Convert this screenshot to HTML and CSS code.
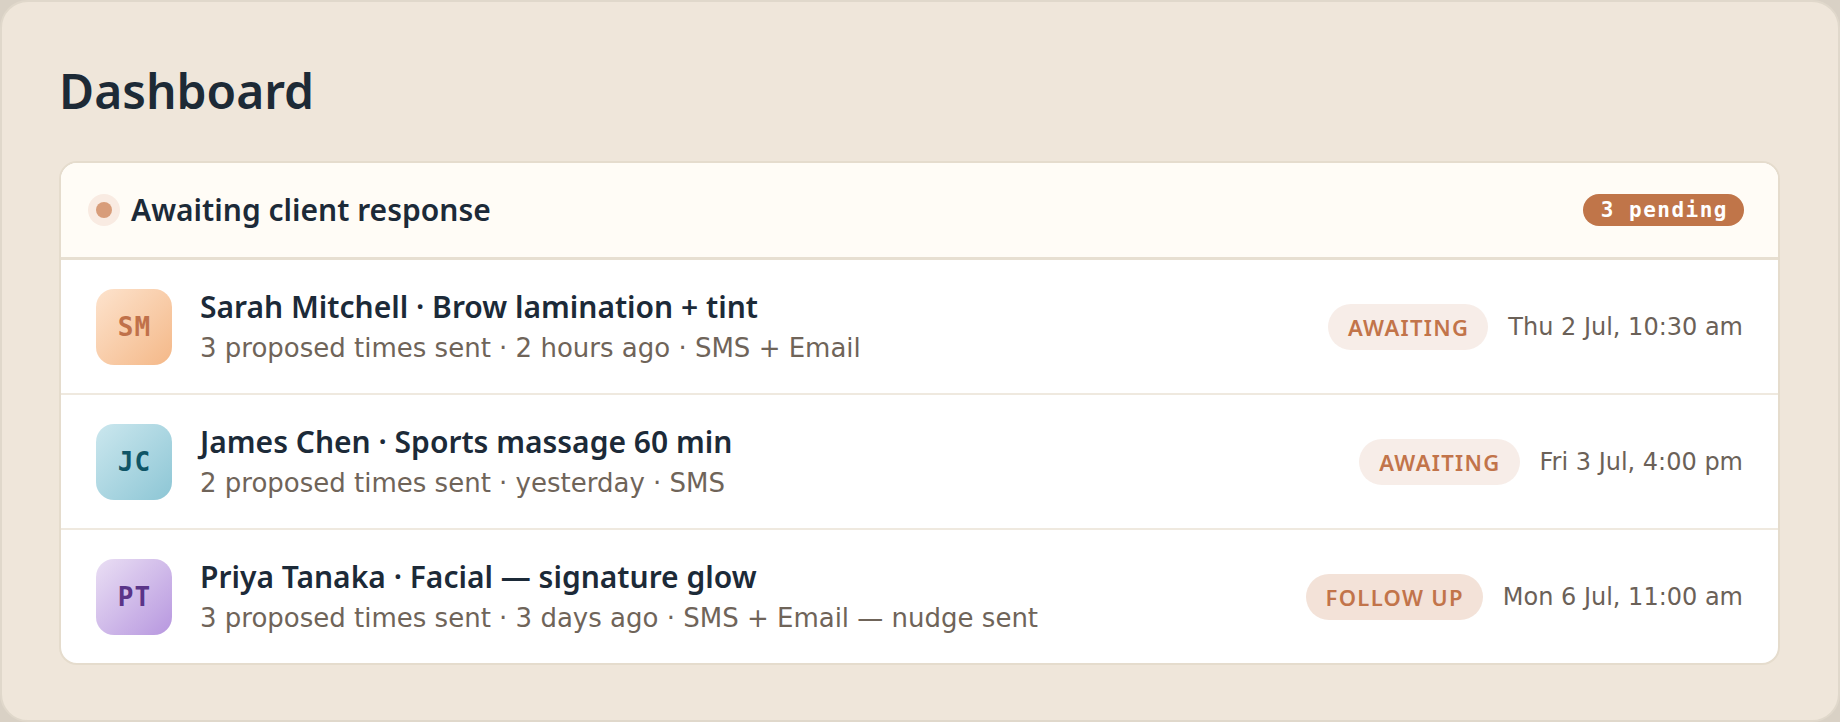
FILE: index.html
```html
<!DOCTYPE html>
<html lang="en">
<head>
<meta charset="utf-8">
<title>Dashboard</title>
<link rel="stylesheet" href="styles.css">
</head>
<body>
<div class="frame">
  <h1 class="title">Dashboard</h1>
  <section class="card">
    <header class="card-head">
      <span class="dot"></span>
      <h2 class="head-title">Awaiting client response</h2>
      <span class="count">3 pending</span>
    </header>
    <div class="row">
      <div class="avatar av-sm">SM</div>
      <div class="info">
        <div class="name">Sarah Mitchell · Brow lamination + tint</div>
        <div class="meta">3 proposed times sent · 2 hours ago · SMS + Email</div>
      </div>
      <span class="pill">AWAITING</span>
      <span class="date">Thu 2 Jul, 10:30 am</span>
    </div>
    <div class="row">
      <div class="avatar av-jc">JC</div>
      <div class="info">
        <div class="name">James Chen · Sports massage 60 min</div>
        <div class="meta">2 proposed times sent · yesterday · SMS</div>
      </div>
      <span class="pill">AWAITING</span>
      <span class="date">Fri 3 Jul, 4:00 pm</span>
    </div>
    <div class="row">
      <div class="avatar av-pt">PT</div>
      <div class="info">
        <div class="name">Priya Tanaka · Facial — signature glow</div>
        <div class="meta">3 proposed times sent · 3 days ago · SMS + Email — nudge sent</div>
      </div>
      <span class="pill pill-follow">FOLLOW UP</span>
      <span class="date">Mon 6 Jul, 11:00 am</span>
    </div>
  </section>
</div>
</body>
</html>
```
FILE: styles.css
```css
* { box-sizing: border-box; }
html, body { margin: 0; padding: 0; }
body {
  background: #d9d1c5;
  font-family: "Noto Sans", "DejaVu Sans", sans-serif;
}
.frame {
  height: 722px;
  background: #efe6da;
  border: 2px solid #e0d8cb;
  border-radius: 28px;
  padding: 60px 58px 0 57px;
}
.title {
  margin: 0 0 41px;
  font-family: "Noto Sans", sans-serif;
  font-weight: 600;
  font-size: 48px;
  line-height: 1.2;
  color: #1d2a36;
}
.card {
  background: #ffffff;
  border: 2px solid #e5dccd;
  border-radius: 18px;
  overflow: hidden;
}
.card-head {
  display: flex;
  align-items: center;
  height: 97px;
  padding: 0 34px 0 35px;
  background: #fffcf6;
  border-bottom: 3px solid #e7dfd1;
}
.dot {
  width: 16px;
  height: 16px;
  border-radius: 50%;
  background: #d89d7a;
  box-shadow: 0 0 0 8px #f9ebe2;
  flex: none;
}
.head-title {
  margin: 0 0 0 19px;
  flex: 1;
  font-weight: 600;
  font-size: 30px;
  line-height: 1.3;
  color: #1c2a38;
}
.count {
  height: 32px;
  line-height: 32px;
  padding: 0 16px 0 18px;
  border-radius: 16px;
  background: #c07549;
  color: #ffffff;
  font-family: "DejaVu Sans Mono", monospace;
  font-weight: 700;
  font-size: 21px;
  letter-spacing: 1.5px;
}
.row {
  display: flex;
  align-items: center;
  padding: 29px 35px 28px;
  border-bottom: 2px solid #efe9df;
}
.row:last-child { border-bottom: 0; }
.avatar {
  width: 76px;
  height: 76px;
  border-radius: 18px;
  flex: none;
  display: flex;
  align-items: center;
  justify-content: center;
  font-family: "DejaVu Sans Mono", monospace;
  font-weight: 700;
  font-size: 26px;
  letter-spacing: 1px;
  padding-left: 1px;
}
.av-sm { background: linear-gradient(135deg, #fde3cd 0%, #f4b888 100%); color: #c0714a; }
.av-jc { background: linear-gradient(135deg, #cbe7ee 0%, #8dc6d5 100%); color: #0f5566; }
.av-pt { background: linear-gradient(135deg, #eadff4 0%, #b797df 100%); color: #5a3488; }
.info {
  flex: 1;
  margin-left: 28px;
  display: flex;
  flex-direction: column;
  gap: 10px;
  padding-bottom: 1px;
}
.name {
  font-weight: 600;
  font-size: 30px;
  line-height: 34px;
  color: #1c2a38;
}
.meta {
  font-family: "DejaVu Sans", sans-serif;
  font-size: 26px;
  line-height: 28px;
  color: #6f6459;
}
.pill {
  height: 46px;
  line-height: 46px;
  padding: 0 19px 0 20px;
  border-radius: 23px;
  background: #f7ede8;
  color: #c2744a;
  font-weight: 600;
  font-size: 22px;
  letter-spacing: 1.3px;
  flex: none;
}
.pill-follow { background: #f3e2d8; }
.date {
  margin-left: 20px;
  font-family: "DejaVu Sans", sans-serif;
  font-size: 24px;
  color: #6b6158;
  white-space: nowrap;
}
```
